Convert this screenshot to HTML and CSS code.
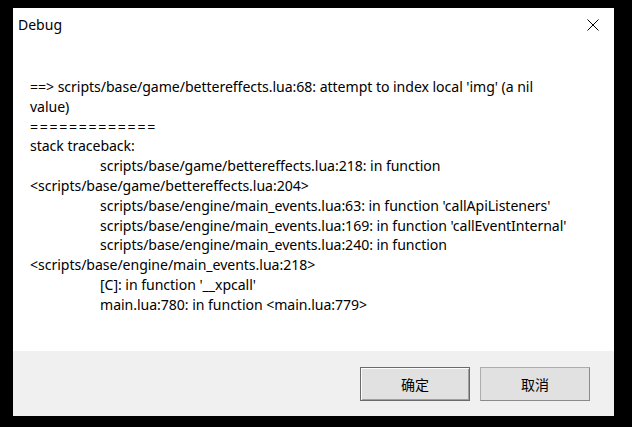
FILE: index.html
```html
<!DOCTYPE html>
<html>
<head>
<meta charset="utf-8">
<link rel="stylesheet" href="styles.css">
</head>
<body>
<div class="dialog">
  <div class="titlebar">
    <span class="title">Debug</span>
    <span class="close"><svg width="12" height="12" viewBox="0 0 12 12"><path d="M0.5 0.5 L11.5 11.5 M11.5 0.5 L0.5 11.5" stroke="#000" stroke-width="1" fill="none"/></svg></span>
  </div>
  <div class="content">
    <div class="line">==&gt; scripts/base/game/bettereffects.lua:68: attempt to index local 'img' (a nil</div>
    <div class="line">value)</div>
    <div class="line rule">=============</div>
    <div class="line">stack traceback:</div>
    <div class="line indent">scripts/base/game/bettereffects.lua:218: in function</div>
    <div class="line">&lt;scripts/base/game/bettereffects.lua:204&gt;</div>
    <div class="line indent">scripts/base/engine/main_events.lua:63: in function 'callApiListeners'</div>
    <div class="line indent">scripts/base/engine/main_events.lua:169: in function 'callEventInternal'</div>
    <div class="line indent">scripts/base/engine/main_events.lua:240: in function</div>
    <div class="line">&lt;scripts/base/engine/main_events.lua:218&gt;</div>
    <div class="line indent">[C]: in function '__xpcall'</div>
    <div class="line indent">main.lua:780: in function &lt;main.lua:779&gt;</div>
  </div>
  <div class="footer">
    <button class="btn default">确定</button>
    <button class="btn">取消</button>
  </div>
</div>
</body>
</html>
```
FILE: styles.css
```css
html, body {
  margin: 0;
  padding: 0;
  background: #000;
}
body {
  width: 632px;
  height: 427px;
  overflow: hidden;
  font-family: "Noto Sans", "Open Sans", sans-serif;
}
.dialog {
  margin: 8px 0 0 13px;
  width: 601px;
  height: 408px;
  background: #fff;
  display: flex;
  flex-direction: column;
}
.titlebar {
  height: 32px;
  display: flex;
  align-items: center;
  justify-content: space-between;
  padding: 0 15px 0 5px;
}
.title {
  font-size: 14px;
  color: #000;
  margin-top: 1px;
}
.close {
  display: flex;
  margin-top: 1px;
}
.content {
  flex: 1;
  padding: 37px 0 0 17px;
  font-size: 14.1px;
  line-height: 19.8px;
  color: #000;
  letter-spacing: -0.05px;
}
.line {
  white-space: nowrap;
}
.rule {
  letter-spacing: 1.7px;
}
.indent {
  padding-left: 70px;
}
.footer {
  height: 65px;
  background: #f0f0f0;
  display: flex;
  justify-content: flex-end;
  align-items: center;
  gap: 10px;
  padding-right: 24px;
}
.btn {
  width: 110px;
  height: 34px;
  margin-top: 1px;
  background: #e1e1e1;
  border: 1px solid #adadad;
  border-right-color: #8a8a8a;
  border-bottom-color: #8a8a8a;
  font-family: "Noto Sans CJK SC", sans-serif;
  font-size: 14px;
  color: #000;
  padding: 0;
}
.btn.default {
  border: 1px solid #6a6a6a;
  box-shadow: inset 1px 1px 0 #fbfbfb, inset -1px -1px 0 #a0a0a0;
}
```
